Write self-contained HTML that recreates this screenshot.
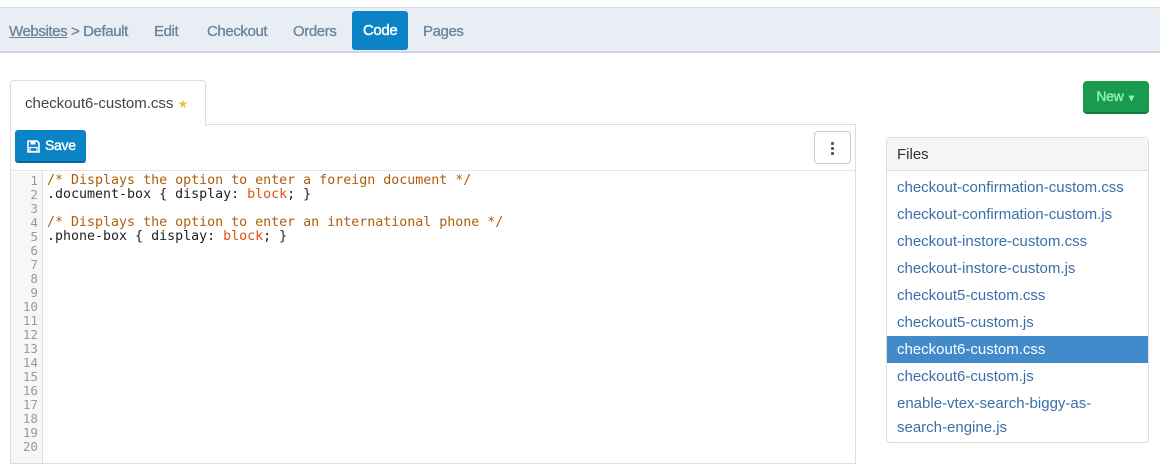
<!DOCTYPE html>
<html><head><style>
*{box-sizing:border-box;margin:0;padding:0}
body{width:1169px;height:457px;overflow:hidden;background:#fff;font-family:"Liberation Sans",sans-serif;position:relative}
.nav{position:absolute;left:0;top:7px;width:1160px;height:46px;background:#e9eef4;border-top:1px solid #d5dce3;border-bottom:2px solid #cfd6dd}
.nav span{position:absolute;top:3px;height:42px;line-height:42px;font-family:"Liberation Sans",sans-serif;font-size:15px;letter-spacing:-0.4px;color:#6b849b;-webkit-text-stroke:0.3px #6b849b}
.nav .act{background:#0a84c6;color:#fff;-webkit-text-stroke:0.4px #fff;border-radius:3px;top:3px;height:39px;line-height:39px;padding:0 11px}
.tab{position:absolute;left:10px;top:80px;width:196px;height:46px;border:1px solid #ddd;border-bottom:none;border-radius:4px 4px 0 0;background:#fff;font-size:15px;color:#444;padding:14px 0 0 14px;z-index:2}
.tab b{color:#f0c030;font-size:12px;font-weight:normal}
.ed{position:absolute;left:10px;top:124px;width:846px;height:340px;border:1px solid #ddd}
.tb{height:46px;border-bottom:1px solid #e5e5e5;position:relative}
.save{position:absolute;left:4px;top:5px;width:71px;height:33px;background:#0a84c6;border-radius:3px;border-bottom:2px solid #06659a;color:#fff;font-size:14px;letter-spacing:-0.3px;line-height:31px;padding-left:30px;-webkit-text-stroke:0.4px #fff}
.kb{position:absolute;left:803px;top:6px;width:37px;height:33px;border:1px solid #ccc;border-radius:4px}
.kb i{position:absolute;left:16px;width:3px;height:3px;background:#555;border-radius:1px}
.code{position:absolute;top:47px;left:0;right:0;bottom:0;font-family:"DejaVu Sans Mono",monospace;font-size:13.3px;line-height:14px}
.gut{position:absolute;left:0;top:0;width:32px;bottom:0;background:#f7f7f7;border-right:1px solid #ddd;color:#999;text-align:right;padding:2px 4px 0 0;font-size:12.6px}
.lines{position:absolute;left:36px;top:2px;white-space:pre;color:#222}
.c{color:#b25d0c}.k{color:#e0530e}
.new{position:absolute;left:1083px;top:81px;width:66px;height:33px;background:#1a9a4f;border-radius:4px;border-bottom:2px solid #137a3d;color:#8ef0b0;font-size:14px;letter-spacing:-0.3px;line-height:31px;text-align:center;-webkit-text-stroke:0.4px #8ef0b0}
.new small{font-size:9px}
.files{position:absolute;left:886px;top:137px;width:263px;height:306px;border:1px solid #ddd;border-radius:4px}
.fh{height:33px;background:#f5f5f5;border-bottom:1px solid #ddd;font-size:15px;color:#333;padding:8px 10px}
.fl{padding-top:3px}
.fl div{padding:0 10px;font-size:15px;color:#3a6fa8;line-height:27px}
.fl .sel{background:#428bca;color:#fff}
</style></head><body>
<div class="nav">
<span style="left:9px"><u>Websites</u> &gt; Default</span>
<span style="left:154px">Edit</span>
<span style="left:207px">Checkout</span>
<span style="left:293px">Orders</span>
<span class="act" style="left:352px">Code</span>
<span style="left:423px">Pages</span>
</div>
<div class="tab">checkout6-custom.css <b>★</b></div>
<div class="ed">
<div class="tb">
<div class="save"><svg style="position:absolute;left:12px;top:10px" width="13" height="13" viewBox="0 0 13 13"><path d="M1 1h9l2 2v9H1z" fill="none" stroke="#fff" stroke-width="1.6"/><rect x="3.5" y="1" width="5" height="3.5" fill="#fff"/><rect x="3" y="7.5" width="7" height="4" fill="none" stroke="#fff" stroke-width="1.2"/></svg>Save</div>
<div class="kb"><i style="top:10px"></i><i style="top:15px"></i><i style="top:20px"></i></div>
</div>
<div class="code">
<div class="gut">1<br>2<br>3<br>4<br>5<br>6<br>7<br>8<br>9<br>10<br>11<br>12<br>13<br>14<br>15<br>16<br>17<br>18<br>19<br>20</div>
<div class="lines"><span class="c">/* Displays the option to enter a foreign document */</span>
.document-box { display: <span class="k">block</span>; }

<span class="c">/* Displays the option to enter an international phone */</span>
.phone-box { display: <span class="k">block</span>; }</div>
</div>
</div>
<div class="new">New <small>▼</small></div>
<div class="files">
<div class="fh">Files</div>
<div class="fl">
<div>checkout-confirmation-custom.css</div>
<div>checkout-confirmation-custom.js</div>
<div>checkout-instore-custom.css</div>
<div>checkout-instore-custom.js</div>
<div>checkout5-custom.css</div>
<div>checkout5-custom.js</div>
<div class="sel">checkout6-custom.css</div>
<div>checkout6-custom.js</div>
<div style="line-height:24px;padding-top:2px">enable-vtex-search-biggy-as-<br>search-engine.js</div>
</div>
</div>
</body></html>
